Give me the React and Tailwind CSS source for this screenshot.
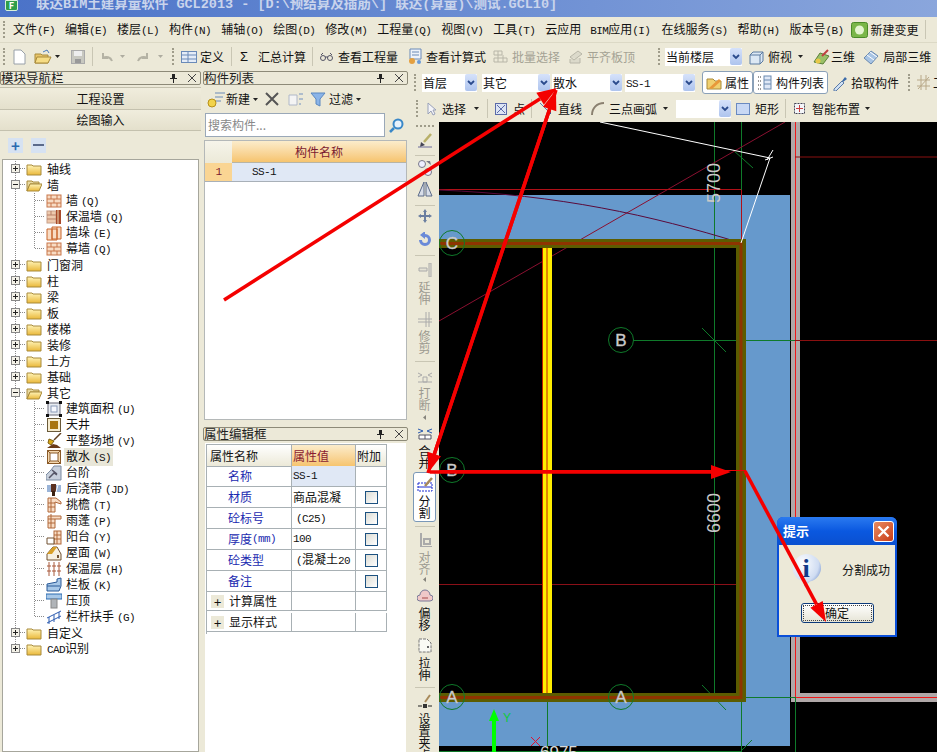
const CJK = "font-['Noto_Sans_CJK_SC','Liberation_Sans',sans-serif]";

// half width latin, like the bitmap song font of the app
const K = ({ children }) => (
  <span className="font-['Liberation_Mono','Noto_Sans_CJK_SC',monospace] text-[11px] tracking-[-0.6px]">{children}</span>
);

const Grip = ({ className = "" }) => (
  <div className={`w-[3px] h-[17px] shrink-0 border-l-2 border-dotted border-[#9f9c8a] ${className}`} />
);
const Sep = ({ className = "" }) => <div className={`w-px h-[19px] shrink-0 bg-[#c9c6b4] ${className}`} />;
const Caret = ({ className = "" }) => (
  <svg width="5" height="3" viewBox="0 0 5 3" className={`shrink-0 ${className}`}>
    <path d="M0 0h5L2.5 3z" fill="#222" />
  </svg>
);
const T = ({ children, className = "" }) => (
  <span className={`shrink-0 whitespace-nowrap leading-[16px] ${className}`}>{children}</span>
);
const Ic = ({ w = 16, h = 16, children, className = "" }) => (
  <svg width={w} height={h} viewBox={`0 0 ${w} ${h}`} className={`shrink-0 ${className}`}>{children}</svg>
);

const Combo = ({ w, label, className = "" }) => (
  <div className={`flex items-center justify-between h-[18px] bg-white shrink-0 pl-[1px] ${w} ${className}`}>
    <span className="leading-[16px] whitespace-nowrap">{label}</span>
    <div className="w-[12px] h-[17px] rounded-[2px] bg-gradient-to-b from-[#d6e2fa] to-[#aec4ee] flex items-center justify-center">
      <svg width="8" height="6" viewBox="0 0 8 6"><path d="M1 1l3 3 3-3" stroke="#2a4a8c" strokeWidth="1.8" fill="none" /></svg>
    </div>
  </div>
);

const PanelHead = ({ title }) => (
  <div className="flex items-center justify-between h-[14px] border border-[#8d8a78] rounded-[2px] bg-[#ece9d8] shrink-0">
    <span className="text-[12.5px] leading-[12px] whitespace-nowrap text-[#222]">{title}</span>
    <div className="flex items-center gap-[11px] pr-[4px]">
      <svg width="7" height="9" viewBox="0 0 7 9"><path d="M2 0h3v4h2v1H4v4H3V5H0V4h2z" fill="#222" /></svg>
      <svg width="8" height="8" viewBox="0 0 8 8"><path d="M0 0l8 8M8 0L0 8" stroke="#444" /></svg>
    </div>
  </div>
);

/* ---------- tree icons ---------- */
const Folder = () => (
  <Ic w={16} h={13}>
    <path d="M1 2h5l1 1h8v9H1z" fill="url(#folderFill)" stroke="#a88a3a" />
  </Ic>
);
const FolderOpen = () => (
  <Ic w={16} h={13}>
    <path d="M1 2h5l1 1h6v2H4L1 12z" fill="#e8d9a0" stroke="#a88a3a" />
    <path d="M4 5h12l-3 7H1z" fill="url(#folderFill)" stroke="#a88a3a" />
  </Ic>
);
const Brick = () => (
  <Ic>
    <rect x="1" y="2" width="14" height="12" fill="#f8dcc4" stroke="#c8764a" />
    <path d="M1 6h14M1 10h14M5 2v4M11 2v4M8 6v4M5 10v4M11 10v4" stroke="#c8764a" />
  </Ic>
);
const WarmWall = () => (
  <Ic>
    <rect x="1" y="2" width="9" height="12" fill="#eec9ac" stroke="#c8a08a" />
    <path d="M1 6h9M1 10h9M5 2v4" stroke="#b98068" />
    <rect x="10" y="1" width="5" height="14" fill="#a84a2a" />
    <path d="M12 1v14" stroke="#f0d8b0" />
  </Ic>
);
const Pier = () => (
  <Ic>
    <path d="M1 4h10v11H1zM6 2h9v12H6z" fill="#f8dcc4" stroke="#c8642a" />
    <path d="M6 4v11M11 2v12" stroke="#c8642a" />
  </Ic>
);
const Area = () => (
  <Ic>
    <rect x="2" y="2" width="12" height="12" fill="#e8ecf2" stroke="#667" />
    <rect x="5" y="5" width="6" height="6" fill="#f6f8ff" stroke="#8a9ab8" />
    <path d="M0 0h3v3H0zM13 0h3v3h-3zM0 13h3v3H0zM13 13h3v3h-3z" fill="#111" />
  </Ic>
);
const Well = () => (
  <Ic>
    <rect x="1.5" y="1.5" width="13" height="13" fill="#f6ecd0" stroke="#6a5a3a" />
    <rect x="4" y="4" width="8" height="8" fill="#a87410" />
  </Ic>
);
const Shovel = () => (
  <Ic>
    <path d="M15 0L8 7" stroke="#604020" strokeWidth="1.5" />
    <path d="M3 6l5 2-3 4-3-2z" fill="#d8a818" stroke="#806010" />
    <path d="M1 15l6-4 4 1 4 3z" fill="#6a3a18" />
  </Ic>
);
const Apron = () => (
  <Ic>
    <rect x="1.5" y="1.5" width="13" height="13" fill="#f4d8b0" stroke="#8a5a28" />
    <rect x="4" y="4" width="8" height="8" fill="#fff" stroke="#8a5a28" />
    <path d="M1 1l3 3M15 1l-3 3M1 15l3-3M15 15l-3-3" stroke="#8a5a28" />
  </Ic>
);
const Steps = () => (
  <Ic>
    <path d="M0 15V10l5-5 3-4 7 0v14z" fill="#c8d0dc" stroke="#7a8aa0" />
    <path d="M3 13l5-5 3 2M6 5l5 4" stroke="#556" strokeWidth="1.5" fill="none" />
  </Ic>
);
const Band = () => (
  <Ic>
    <rect x="1" y="4" width="14" height="7" fill="#9ab4d8" />
    <rect x="5" y="3" width="5" height="8" fill="#5a3020" />
    <rect x="6" y="10" width="3" height="5" fill="#3a2010" />
    <path d="M12 4l-2 7" stroke="#fff" />
  </Ic>
);
const Eave = ({ low }) => (
  <Ic>
    <path d={low ? "M2 3h13v3H9v9H2z" : "M2 1h8l5 4v2l-6-2v10H2z"} fill="#f8dcc4" stroke="#b0683a" />
    <path d="M2 6h7M2 10h7M5 1v14" stroke="#b0683a" />
  </Ic>
);
const Balcony = () => (
  <Ic>
    <rect x="8" y="2" width="7" height="13" fill="#f8dcc4" stroke="#b0683a" />
    <path d="M8 6h7M8 10h7M11 2v13" stroke="#b0683a" />
    <path d="M1 9h7v6H1z" fill="#fff" stroke="#705030" />
  </Ic>
);
const Roof = () => (
  <Ic>
    <path d="M1 9l6-7h4l4 7v6H1z" fill="#f6f0e0" stroke="#705030" />
    <path d="M1 9l6-7h4l-5 7z" fill="#d8a028" />
    <rect x="11" y="10" width="2" height="3" fill="#705030" />
  </Ic>
);
const Insul = () => (
  <Ic>
    <path d="M3 1v14M8 1v14M13 1v14M1 5h4M6 5h4M11 5h4M1 10h4M6 10h4M11 10h4" stroke="#a8583a" />
  </Ic>
);
const Parapet = () => (
  <Ic>
    <path d="M1 7l10-2 0-3 4-1v8l-2 5H1z" fill="#a8c8e8" stroke="#2a5a98" />
    <path d="M1 9h13" stroke="#2a5a98" />
  </Ic>
);
const Coping = () => (
  <Ic>
    <rect x="0" y="1" width="16" height="5" fill="#a8c8e8" stroke="#2a6ab0" />
    <rect x="5" y="6" width="6" height="9" fill="#b0b4b8" stroke="#888" />
  </Ic>
);
const Rail = () => (
  <Ic>
    <path d="M1 14l14-7M1 9l14-7M3 8v7M8 6v7M13 3v7" stroke="#2a5ab0" fill="none" />
  </Ic>
);

const tree = [
  { label: "轴线" },
  {
    label: "墙",
    open: true,
    kids: [
      [<Brick />, "墙", "(Q)"],
      [<WarmWall />, "保温墙", "(Q)"],
      [<Pier />, "墙垛", "(E)"],
      [<Brick />, "幕墙", "(Q)"],
    ],
  },
  { label: "门窗洞" },
  { label: "柱" },
  { label: "梁" },
  { label: "板" },
  { label: "楼梯" },
  { label: "装修" },
  { label: "土方" },
  { label: "基础" },
  {
    label: "其它",
    open: true,
    kids: [
      [<Area />, "建筑面积", "(U)"],
      [<Well />, "天井", ""],
      [<Shovel />, "平整场地", "(V)"],
      [<Apron />, "散水", "(S)", true],
      [<Steps />, "台阶", ""],
      [<Band />, "后浇带", "(JD)"],
      [<Eave />, "挑檐", "(T)"],
      [<Eave low />, "雨蓬", "(P)"],
      [<Balcony />, "阳台", "(Y)"],
      [<Roof />, "屋面", "(W)"],
      [<Insul />, "保温层", "(H)"],
      [<Parapet />, "栏板", "(K)"],
      [<Coping />, "压顶", ""],
      [<Rail />, "栏杆扶手", "(G)"],
    ],
  },
  { label: "自定义" },
  { label: "CAD识别", last: true },
];

const dots = { stroke: "#8a8a8a", strokeDasharray: "1 1" };

const RootRow = ({ item }) => (
  <div className="flex items-center h-4">
    <svg width="26" height="16" viewBox="0 0 26 16" className="shrink-0">
      <path d={item.last ? "M15.5 0v8" : "M15.5 0v16"} {...dots} />
      <path d="M16 7.5h10" {...dots} />
      <rect x="11.5" y="3.5" width="8" height="8" fill="#f4f2e8" stroke="#888" />
      <path d="M13 7.5h5" stroke="#222" />
      {!item.open && <path d="M15.5 5v5" stroke="#222" />}
    </svg>
    {item.open ? <FolderOpen /> : <Folder />}
    <T className="ml-[5px]">
      {item.label === "CAD识别" ? <><K>CAD</K>识别</> : item.label}
    </T>
  </div>
);

const KidRow = ({ kid, end }) => (
  <div className="flex items-center h-4">
    <svg width="46" height="16" viewBox="0 0 46 16" className="shrink-0">
      <path d="M15.5 0v16" {...dots} />
      <path d={end ? "M34.5 0v8" : "M34.5 0v16"} {...dots} />
      <path d="M35 7.5h10" {...dots} />
    </svg>
    {kid[0]}
    <T className={`ml-[2px] px-[2px] ${kid[3] ? "bg-[#e8e6d8]" : ""}`}>
      {kid[1]}<span className="pl-[3px]"><K>{kid[2]}</K></span>
    </T>
  </div>
);

const NavPanel = () => (
  <div className="w-[201px] shrink-0 flex flex-col pt-px h-full">
    <PanelHead title="模块导航栏" />
    <div className="h-[23px] mt-[2px] flex items-center justify-center border-y border-[#c4c1ae] bg-gradient-to-b from-[#f0eddd] to-[#e4e0cc] shrink-0">工程设置</div>
    <div className="h-[21px] flex items-center justify-center border-b border-[#c4c1ae] bg-gradient-to-b from-[#f0eddd] to-[#e4e0cc] shrink-0">绘图输入</div>
    <div className="h-[28px] flex items-center gap-2 pl-[8px] bg-[#ece9d8] shrink-0">
      <div className="w-[15px] h-[15px] bg-[#d6e2f2] flex items-center justify-center text-[#2a6ab0] font-bold text-[15px] leading-none">+</div>
      <div className="w-[15px] h-[15px] bg-[#d6e2f2] flex items-center justify-center">
        <div className="w-[11px] h-[2px] bg-[#5a6a8a]" />
      </div>
    </div>
    <div className="flex-1 ml-[2px] mr-[2px] bg-white border border-[#a6a69c] pt-px overflow-hidden">
      <div className="-ml-[3px]">
        {tree.map((item) => (
          <div key={item.label}>
            <RootRow item={item} />
            {item.kids?.map((kid, i) => (
              <KidRow key={kid[1]} kid={kid} end={i === item.kids.length - 1} />
            ))}
          </div>
        ))}
      </div>
    </div>
  </div>
);

const ListPanel = () => (
  <div className="h-[352px] flex flex-col pt-px shrink-0">
    <PanelHead title="构件列表" />
    <div className="h-[28px] flex items-center shrink-0 pl-[4px]">
      <Ic w={18} h={18}>
        <path d="M8 3h10M8 7h8M8 11h6" stroke="#6a8ab8" />
        <circle cx="5" cy="13" r="4" fill="#f2d34a" stroke="#b89018" />
      </Ic>
      <T className="ml-[1px]">新建</T>
      <Caret className="ml-[3px]" />
      <Ic w={14} h={14} className="ml-[7px]"><path d="M1 1l12 12M13 1L1 13" stroke="#555" strokeWidth="2" /></Ic>
      <Ic w={16} h={14} className="ml-[9px]">
        <path d="M1 3h8v10H1z" fill="#f4f4f4" stroke="#b0b8c8" />
        <path d="M11 2h4M11 7h4M11 12h2" stroke="#7090c0" />
      </Ic>
      <Ic w={16} h={16} className="ml-[6px]"><path d="M1 2h14l-5 6v7l-4-2V8z" fill="#8ab4e8" stroke="#5a88c0" /></Ic>
      <T className="ml-[3px]">过滤</T>
      <Caret className="ml-[3px]" />
    </div>
    <div className="flex items-center shrink-0 h-[24px]">
      <div className="w-[180px] h-[24px] ml-[2px] bg-white border border-[#9aa8b8] pl-[2px] flex items-center text-[#888]">
        <T>搜索构件...</T>
      </div>
      <Ic w={15} h={15} className="ml-[4px]">
        <circle cx="9" cy="6" r="4.5" fill="#e8f2fc" stroke="#3a88c8" strokeWidth="2" />
        <path d="M5 10l-4 4" stroke="#3a88c8" strokeWidth="2.5" />
      </Ic>
    </div>
    <div className="flex-1 mt-[3px] mx-[1px] mb-[2px] bg-white border border-[#b4b8b8] overflow-hidden">
      <div className="grid grid-cols-[27px_1fr] grid-rows-[22px_19px]">
        <div className="bg-gradient-to-b from-[#f6f4ea] to-[#ece9d8]" />
        <div className="bg-gradient-to-b from-[#fbeccb] to-[#f6c46e] flex items-center justify-center text-[#7a1a30] border-b border-[#b8b4a4]">构件名称</div>
        <div className="bg-[#fad593] flex items-center justify-center border-b border-[#a8b0b8] text-[#7a1a30]"><K>1</K></div>
        <div className="bg-[#e0e8f5] flex items-center pl-[20px] border-b border-[#a8b0b8]"><K>SS-1</K></div>
      </div>
    </div>
  </div>
);

const propRows = [
  ["名称", <K>SS-1</K>, false, true],
  ["材质", "商品混凝", true],
  ["砼标号", <span className="pl-[3px]"><K>(C25)</K></span>, true],
  [<>厚度<K>(mm)</K></>, <K>100</K>, true],
  ["砼类型", <span className="pl-[3px]"><K>(</K>混凝土<K>20</K></span>, true],
  ["备注", "", true],
];

const PropPanel = () => (
  <div className="flex-1 flex flex-col pt-[5px] min-h-0">
    <PanelHead title="属性编辑框" />
    <div className="flex-1 mt-[2px] ml-[2px] mr-[2px] bg-white pl-px pt-px overflow-hidden">
      <div className="grid grid-cols-[85px_64px_31px] auto-rows-[21px] w-[181px] border-l border-t border-[#a8b0b4]">
        <div className="h-[22px] flex items-center pl-[3px] bg-gradient-to-b from-white to-[#ece9d8] border-r border-b border-[#a8b0b4]">属性名称</div>
        <div className="h-[22px] flex items-center pl-px text-[#8a1a30] bg-gradient-to-b from-[#fbeccb] to-[#f6c46e] border-r border-b border-[#a8b0b4]">属性值</div>
        <div className="h-[22px] flex items-center pl-px bg-gradient-to-b from-white to-[#ece9d8] border-r border-b border-[#a8b0b4]">附加</div>
        {propRows.map(([name, value, check, active], i) => (
          <div key={i} className="contents">
            <div className="flex items-center pl-[21px] text-[#1a2ab0] border-r border-b border-[#a8b0b4] whitespace-nowrap">{name}</div>
            <div className={`flex items-center pl-px border-r border-b border-[#a8b0b4] whitespace-nowrap overflow-hidden ${active ? "bg-[#e0e8f5]" : ""}`}>{value}</div>
            <div className="flex items-center justify-center border-r border-b border-[#a8b0b4]">
              {check && <div className="w-[13px] h-[13px] border border-[#1c5180] bg-gradient-to-br from-[#dcdcd4] to-white" />}
            </div>
          </div>
        ))}
        {["计算属性", "显示样式"].map((name) => (
          <div key={name} className="contents">
            <div className="h-[19px] flex items-center pl-[4px] gap-[5px] border-r border-b border-[#a8b0b4]">
              <div className="w-[13px] h-[13px] bg-[#ece9d8] flex items-center justify-center text-[13px] leading-none">+</div>
              {name}
            </div>
            <div className="h-[19px] border-r border-b border-[#a8b0b4]" />
            <div className="h-[19px] border-r border-b border-[#a8b0b4]" />
          </div>
        ))}
      </div>
    </div>
  </div>
);

const VText = ({ text, className = "" }) => (
  <div className={`flex flex-col items-center shrink-0 ${className}`}>
    {text.split("").map((c, i) => <div key={i} className="h-[12px] leading-[12px]">{c}</div>)}
  </div>
);
const VSep = ({ className = "" }) => <div className={`w-[20px] h-px bg-[#c9c6b4] shrink-0 ${className}`} />;

const SideTools = () => (
  <div className="w-[29px] shrink-0 h-full flex flex-col items-center pt-[3px] overflow-hidden text-[#111] bg-[#ece9d8]">
    <div className="w-[18px] h-[2px] border-t-2 border-dotted border-[#9f9c8a] shrink-0" />
    <Ic className="mt-[6px]">
      <path d="M14 1L7 9" stroke="#b8b068" strokeWidth="2.5" />
      <path d="M4 9l4 3-5 2z" fill="#445" />
      <path d="M1 14h14" stroke="#6a6a9a" />
    </Ic>
    <VSep className="mt-[6px]" />
    <Ic className="mt-[4px]">
      <circle cx="5" cy="4" r="3.5" fill="#eef" stroke="#778" />
      <circle cx="11" cy="12" r="3.5" fill="#eef" stroke="#778" />
      <path d="M9 1l5 4-1-4z" fill="#778" />
    </Ic>
    <Ic w={16} h={18} className="mt-[4px]">
      <path d="M7 2L1 16h6zM9 2l6 14H9z" fill="#d8dee8" stroke="#5a6a88" />
    </Ic>
    <VSep className="mt-[7px]" />
    <Ic className="mt-[2px]">
      <path d="M8 1l2 3H9v3h3V6l3 2-3 2V9H9v3h1l-2 3-2-3h1V9H4v1L1 8l3-2v1h3V4H6z" fill="#6a7ea0" />
    </Ic>
    <Ic className="mt-[8px]">
      <path d="M8 2a6 6 0 1 1-6 6h3a3 3 0 1 0 3-3v2L3 3l5-4z" fill="#6a8ad8" />
    </Ic>
    <VSep className="mt-[7px]" />
    <Ic h={14} className="mt-[7px]">
      <path d="M2 5h8v3H2zM12 0h2v14h-2z" fill="#e4e2d4" stroke="#aaa" />
    </Ic>
    <VText text="延伸" className="mt-[4px] text-[#9c9a90]" />
    <Ic h={15} className="mt-[7px]"><path d="M1 7h14M1 10h14M9 0v15M12 0v15" stroke="#aaa" /></Ic>
    <VText text="修剪" className="mt-[3px] text-[#9c9a90]" />
    <VSep className="mt-[7px]" />
    <Ic h={12} className="mt-[9px]"><path d="M1 2l4 2-4 2M15 2l-4 2 4 2M6 6h4v5H6zM1 11h14" stroke="#aaa" fill="none" /></Ic>
    <VText text="打断" className="mt-[4px] text-[#9c9a90]" />
    <Caret className="mt-[5px] rotate-90 opacity-50" />
    <Ic h={12} className="mt-[9px]"><path d="M1 1l5 2-5 2M15 1l-5 2 5 2" stroke="#2a5ab0" fill="none" /><path d="M2 7h12v4H2zM8 7v4" stroke="#556" fill="#fff" /></Ic>
    <VText text="合并" className="mt-[5px]" />
    <div className="mt-[3px] w-[23px] h-[50px] shrink-0 bg-white border border-[#7a98b8] rounded-[3px] flex flex-col items-center pt-[4px]">
      <Ic h={15}>
        <rect x="1" y="6" width="14" height="8" fill="none" stroke="#1a2ad0" strokeDasharray="2 1" />
        <path d="M1 10h14" stroke="#1a2ad0" />
        <path d="M15 1l-7 8" stroke="#a88a5a" strokeWidth="2.5" />
      </Ic>
      <VText text="分割" className="mt-[3px]" />
    </div>
    <VSep className="mt-[4px]" />
    <Ic h={14} className="mt-[6px]"><path d="M4 0v14h11M7 6h6v5H7z" stroke="#aaa" fill="none" strokeWidth="2" /></Ic>
    <VText text="对齐" className="mt-[4px] text-[#9c9a90]" />
    <Caret className="mt-[3px] rotate-90 opacity-50" />
    <Ic h={14} className="mt-[8px]">
      <path d="M3 12a3 3 0 0 1 0-6 5 5 0 0 1 10 0 3 3 0 0 1 0 6z" fill="#f0c8c8" stroke="#7a7a98" />
      <path d="M5 9h6" stroke="#c88" strokeWidth="2" />
    </Ic>
    <VText text="偏移" className="mt-[4px]" />
    <Ic h={15} className="mt-[7px]">
      <path d="M2 1h8l4 4v9H2z" fill="#fafaf4" stroke="#777" strokeDasharray="3 1" />
      <path d="M10 8h2v2h-2z" fill="#666" />
    </Ic>
    <VText text="拉伸" className="mt-[4px]" />
    <VSep className="mt-[6px]" />
    <Ic className="mt-[6px]">
      <path d="M13 1L8 8" stroke="#a88a5a" strokeWidth="2" />
      <path d="M1 12h4M11 12h4" stroke="#222" />
      <rect x="6" y="10" width="4" height="4" fill="#333" />
    </Ic>
    <VText text="设置夹点" className="mt-[3px]" />
  </div>
);

const Hex = ({ cx, cy, label }) => (
  <g>
    <circle cx={cx} cy={cy} r="12.5" fill="none" stroke="#0f7a2a" />
    <text x={cx} y={cy + 6} textAnchor="middle" fontSize="17" fontFamily="Liberation Sans" stroke="#bdbdbd" strokeWidth="0.4" fill="#d0d0d0">{label}</text>
  </g>
);

const Cad = () => (
  <svg width="498" height="630" viewBox="439 122 498 630" className="shrink-0 block">
    <rect x="439" y="122" width="498" height="630" fill="#000" />
    {/* slab */}
    <rect x="439" y="195" width="351" height="551" fill="#6699cc" />
    <rect x="439" y="248" width="297" height="445" fill="#000" />
    {/* grey beam on the right */}
    <rect x="791" y="122" width="9" height="580" fill="#b0a8a8" />
    <rect x="795" y="693" width="142" height="9" fill="#b0a8a8" />
    <rect x="800" y="122" width="137" height="571" fill="#000" />
    <path d="M795.5 122v575.5H937" stroke="#f01818" fill="none" />
    <path d="M795 157h142M795 340.5h142" stroke="#8a1010" />
    {/* thin construction lines */}
    <path d="M714.5 122V700M741.5 122V240" stroke="#0f7a2a" />
    <path d="M633 340.5h162M547.5 693V752M741.5 697V752M795.5 697V752M741 697.5h54M439 751.5h302" stroke="#0f7a2a" />
    <path d="M702 328l24 24M733 150l20 18M702 685l24 25M741 751l11-11" stroke="#0f7a2a" />
    <path d="M439 321L785 122" stroke="#8a1030" />
    <path d="M439 189.5h302M741.5 190v50" stroke="#b01018" />
    <path d="M439 190C560 195 650 215 741 243" stroke="#5a0a3a" fill="none" />
    <path d="M439 584.5h302" stroke="#8a1018" />
    {/* wall */}
    <rect x="439" y="239" width="307" height="9" fill="#5c5c00" />
    <rect x="736" y="239" width="10" height="463" fill="#5c5c00" />
    <rect x="439" y="693" width="307" height="9" fill="#5c5c00" />
    <path d="M439 243.5h302v454H439" stroke="#8e3400" strokeWidth="3" fill="none" />
    <rect x="542" y="248" width="10" height="445" fill="#ffee00" />
    <path d="M542.5 248v445M547 248v445" stroke="#c02000" />
    {/* white bits */}
    <path d="M600 122l170 36-29 85M773 150l-6 10M765 160l8-3" stroke="#fff" fill="none" />
    <Hex cx={452} cy={243} label="C" />
    <Hex cx={621} cy={340} label="B" />
    <Hex cx={452} cy={470} label="B" />
    <Hex cx={452} cy={697} label="A" />
    <Hex cx={621} cy={697} label="A" />
    <text transform="translate(720 203) rotate(-90)" fontSize="18" fontFamily="Liberation Sans" fill="#c8c8c8">5700</text>
    <text transform="translate(720 533) rotate(-90)" fontSize="18" fontFamily="Liberation Sans" fill="#c8c8c8">6600</text>
    <text x="540" y="758" fontSize="17" fontFamily="Liberation Sans" fill="#d8d8d8">6975</text>
    {/* axis */}
    <path d="M494 709l5 12h-3v31h-4v-31h-3z" fill="#00ff00" />
    <text x="503" y="722" fontSize="12" fontFamily="Liberation Sans" fill="#0fc83a">Y</text>
    <path d="M531 737l9 9M540 737l-9 9" stroke="#e01030" />
  </svg>
);

const Arrow = ({ x1, y1, x2, y2 }) => {
  const a = Math.atan2(y2 - y1, x2 - x1);
  const bx = x2 - 20 * Math.cos(a);
  const by = y2 - 20 * Math.sin(a);
  const nx = 7 * Math.sin(a);
  const ny = 7 * Math.cos(a);
  return (
    <g>
      <line x1={x1} y1={y1} x2={bx} y2={by} stroke="#f40000" strokeWidth="3.5" />
      <polygon points={`${x2},${y2} ${bx + nx},${by - ny} ${bx - nx},${by + ny}`} fill="#f40000" />
    </g>
  );
};

const Dialog = () => (
  <div className="absolute left-[777px] top-[517px] w-[120px] h-[120px] rounded-t-[6px] bg-[#0a4fd8] p-[2px] pt-0 flex flex-col">
    <div className="h-[28px] -mx-[2px] rounded-t-[6px] bg-gradient-to-b from-[#2a7af0] via-[#0a58e0] to-[#0a50d0] flex items-center justify-between pl-[6px] pr-[3px] shrink-0">
      <span className="text-white font-bold text-[13px]">提示</span>
      <div className="w-[21px] h-[21px] rounded-[3px] border border-white bg-gradient-to-br from-[#e88a60] to-[#c83a14] flex items-center justify-center">
        <svg width="13" height="13" viewBox="0 0 13 13"><path d="M1.5 1.5l10 10M11.5 1.5l-10 10" stroke="#fff" strokeWidth="2.4" /></svg>
      </div>
    </div>
    <div className="flex-1 bg-[#ece9d8] flex flex-col items-center">
      <div className="flex items-center w-full pl-[11px] pt-[8px]">
        <svg width="33" height="34" viewBox="0 0 33 34" className="shrink-0">
          <defs>
            <radialGradient id="infoBall" cx="0.35" cy="0.3" r="0.8">
              <stop offset="0" stopColor="#ffffff" />
              <stop offset="0.7" stopColor="#cfdcf2" />
              <stop offset="1" stopColor="#6a8ac8" />
            </radialGradient>
          </defs>
          <path d="M16 1a15 14 0 0 1 4 27.5l-6 5 0-5A15 14 0 0 1 16 1z" fill="url(#infoBall)" />
          <text x="16" y="24" textAnchor="middle" fontSize="26" fontWeight="700" fontFamily="Liberation Serif" fill="#123a88">i</text>
        </svg>
        <span className="ml-[19px] text-[#111] whitespace-nowrap">分割成功</span>
      </div>
      <div className="mt-[16px] w-[73px] h-[20px] rounded-[3px] border border-[#0c3a7a] bg-gradient-to-b from-white to-[#e6e4d6] flex items-center justify-center shrink-0 outline-1 -outline-offset-3 outline-dotted outline-[#444]">
        确定
      </div>
    </div>
  </div>
);

const menu = [
  ["文件", "(F)"], ["编辑", "(E)"], ["楼层", "(L)"], ["构件", "(N)"], ["辅轴", "(O)"], ["绘图", "(D)"], ["修改", "(M)"],
  ["工程量", "(Q)"], ["视图", "(V)"], ["工具", "(T)"], ["云应用", ""],
];
const menu2 = [["在线服务", "(S)"], ["帮助", "(H)"], ["版本号", "(B)"]];

export default function App() {
  return (
    <div className={`relative w-[937px] h-[752px] overflow-hidden bg-[#ece9d8] text-[12px] text-[#111] ${CJK}`}>
      <svg className="absolute w-0 h-0">
        <defs>
          <linearGradient id="folderFill" x1="0" y1="0" x2="0" y2="1">
            <stop offset="0" stopColor="#fff4b8" />
            <stop offset="1" stopColor="#eab83a" />
          </linearGradient>
        </defs>
      </svg>

      {/* title bar */}
      <div className="h-[17px] flex items-start overflow-hidden bg-gradient-to-r from-[#4a72c8] to-[#8aa6dc]">
        <div className="ml-[5px] w-[13px] h-[11px] bg-[#2f9e4a] rounded-b-[2px] border border-[#d8f0d8] flex items-end justify-center text-[9px] leading-[9px] text-white font-bold">F</div>
        <span className="ml-[18px] -mt-[5px] whitespace-nowrap font-['Liberation_Mono','Noto_Sans_CJK_SC',monospace] font-bold text-[13.5px] text-[#c9d4ec]">
          联达BIM土建算量软件 GCL2013 - [D:\预结算及插筋\] 联达(算量)\测试.GCL10]
        </span>
      </div>

      {/* menu */}
      <div className="h-[26px] flex items-center pl-[3px] border-b border-[#dcd9c6]">
        <Grip />
        <div className="flex items-center gap-[10px] ml-[7px]">
          {menu.map(([a, b]) => <T key={a}>{a}<K>{b}</K></T>)}
          <T className="-ml-px"><K>BIM</K>应用<K>(I)</K></T>
          {menu2.map(([a, b], i) => <T key={a} className={i === 0 ? "ml-px" : ""}>{a}<K>{b}</K></T>)}
        </div>
        <Ic w={17} h={16} className="ml-[8px]">
          <rect x="0.5" y="0.5" width="16" height="15" rx="2" fill="#7ab648" stroke="#4a8a28" />
          <circle cx="8.5" cy="8" r="4.5" fill="#e4f4d0" />
        </Ic>
        <T className="ml-[2px]">新建变更</T>
        <Sep className="ml-[7px]" />
      </div>

      {/* standard toolbar */}
      <div className="h-[27px] flex items-center pl-[3px]">
        <Grip />
        <Ic w={13} h={16} className="ml-[7px]"><path d="M1 1h7l4 4v10H1z" fill="#fff" stroke="#98a0a8" /></Ic>
        <Ic w={18} h={16} className="ml-[8px]">
          <path d="M1 5h6l1 1h6v8H1z" fill="#e8c468" stroke="#a88a3a" />
          <path d="M3 8h14l-3 6H1z" fill="#f6dc84" stroke="#a88a3a" />
          <path d="M9 3l4-2 2 3" stroke="#4a7ab8" fill="none" />
        </Ic>
        <Caret className="ml-[3px]" />
        <Ic w={14} h={14} className="ml-[11px]">
          <rect x="0.5" y="0.5" width="13" height="13" fill="#c8c8c0" stroke="#aaa" />
          <rect x="3" y="1" width="8" height="5" fill="#eee" />
          <rect x="4" y="9" width="6" height="4" fill="#999" />
        </Ic>
        <Sep className="ml-[7px]" />
        <Ic w={13} h={13} className="ml-[7px]"><path d="M3 3v5h5M3 8a6 6 0 0 1 9 3" stroke="#b4b2a4" strokeWidth="2" fill="none" /></Ic>
        <Caret className="ml-[7px] opacity-30" />
        <Ic w={12} h={13} className="ml-[12px]"><path d="M10 3v5H5M10 8a6 6 0 0 0-9 3" stroke="#b4b2a4" strokeWidth="2" fill="none" /></Ic>
        <Caret className="ml-[9px] opacity-30" />
        <Grip className="ml-[9px]" />
        <Ic w={16} h={14} className="ml-[6px]">
          <rect x="0.5" y="1.5" width="15" height="11" fill="#e4ecf8" stroke="#6a8ab8" />
          <path d="M1 5h14M1 9h14M7 2v10" stroke="#6a8ab8" />
        </Ic>
        <T className="ml-[3px]">定义</T>
        <Sep className="ml-[7px]" />
        <T className="ml-[8px] w-[10px] font-['Liberation_Sans',sans-serif] text-[13px]">Σ</T>
        <T className="ml-[8px]">汇总计算</T>
        <Sep className="ml-[6px]" />
        <Ic w={13} h={10} className="ml-[7px]">
          <circle cx="3" cy="6" r="2.5" fill="none" stroke="#556" />
          <circle cx="10" cy="6" r="2.5" fill="none" stroke="#556" />
          <path d="M5 5h3M1 3l2-2M12 3l-2-2" stroke="#556" />
        </Ic>
        <T className="ml-[5px]">查看工程量</T>
        <Ic w={17} h={17} className="ml-[9px]">
          <path d="M3 1h11v10H3z" fill="#eef2fa" stroke="#6a8ab8" />
          <path d="M5 4h7M5 7h7" stroke="#6a8ab8" />
          <circle cx="5" cy="13" r="3" fill="#e4a040" />
          <circle cx="12" cy="14" r="2" fill="#6a9ad8" />
        </Ic>
        <T className="ml-[2px]">查看计算式</T>
        <Ic w={15} h={15} className="ml-[7px]"><path d="M1 2h8v4H1zM1 9h13v4H1zM5 2v11M10 6v7" stroke="#b8b6a8" fill="none" /></Ic>
        <T className="ml-[4px] text-[#a4a294]">批量选择</T>
        <Ic w={14} h={15} className="ml-[9px]"><path d="M1 8l8-6 4 3-8 6zM1 10v4h10V9" stroke="#b8b6a8" fill="#dcdacb" /></Ic>
        <T className="ml-[4px] text-[#a4a294]">平齐板顶</T>
        <Grip className="ml-[23px]" />
        <Combo w="w-[77px]" label="当前楼层" className="ml-[4px]" />
        <Ic className="ml-[6px]">
          <path d="M5 3h10v9l-3 3H2V6z" fill="#dce8f4" stroke="#5a7aa0" />
          <path d="M2 6h10v9M12 6l3-3" stroke="#5a7aa0" fill="none" />
        </Ic>
        <T className="ml-[4px]">俯视</T>
        <Caret className="ml-[6px]" />
        <Ic w={17} h={17} className="ml-[10px]">
          <path d="M1 14l6-9 9 3-6 8z" fill="#9ac068" stroke="#5a8038" />
          <path d="M9 8l6-6" stroke="#c04040" strokeWidth="2" />
          <circle cx="5" cy="13" r="2.5" fill="#e8c848" />
        </Ic>
        <T className="ml-px">三维</T>
        <Ic className="ml-[8px]">
          <path d="M1 9l7-7 7 5-7 8z" fill="#a8c4e4" stroke="#6a8ab0" />
          <path d="M4 6l7 5M7 3l7 5" stroke="#fff" />
        </Ic>
        <T className="ml-[4px]">局部三维</T>
      </div>

      <div className="h-[682px] flex">
        <NavPanel />
        <div className="w-[205px] shrink-0 ml-[2px] flex flex-col h-full">
          <ListPanel />
          <PropPanel />
        </div>
        <div className="w-[527px] shrink-0 ml-[2px] flex flex-col h-full">
          <div className="h-[25px] flex items-center shrink-0 overflow-hidden">
            <Grip className="ml-[4px]" />
            <Combo w="w-[55px]" label="首层" className="ml-[5px]" />
            <Combo w="w-[68px]" label="其它" className="ml-[5px]" />
            <Combo w="w-[70px]" label="散水" className="ml-[2px]" />
            <Combo w="w-[70px]" label={<K>SS-1</K>} className="ml-[3px]" />
            <div className="ml-[7px] w-[51px] h-[23px] bg-white border border-[#8aa0b8] rounded-[3px] flex items-center justify-between px-[3px] shrink-0">
              <Ic w={17} h={14}>
                <path d="M1 3h6l2 2h6v8H1z" fill="#f0d070" stroke="#a88a3a" />
                <path d="M3 12l10-9 2 2-9 8z" fill="#e8983a" />
              </Ic>
              <span>属性</span>
            </div>
            <div className="w-[75px] h-[23px] bg-white border border-[#8aa0b8] rounded-[3px] flex items-center justify-between px-[3px] shrink-0">
              <Ic w={15} h={15}>
                <path d="M1 2h3M1 6h3M1 10h3M1 14h3" stroke="#333" strokeDasharray="1 1" />
                <rect x="7" y="1" width="7" height="13" fill="#dfe8f6" stroke="#6a8ab0" />
                <path d="M7 5h7M7 9h7" stroke="#6a8ab0" />
              </Ic>
              <span>构件列表</span>
            </div>
            <Ic className="ml-[4px]">
              <path d="M2 14l8-8 2 2-8 8H2z" fill="#cfe0f2" stroke="#5a7aa8" />
              <path d="M10 6l3-4 2 2-4 3z" fill="#3a6aa8" />
            </Ic>
            <T className="ml-[3px]">拾取构件</T>
            <Grip className="ml-[9px]" />
            <Ic w={13} h={15} className="ml-[6px]"><path d="M0 11h13M0 5h13M4 0v15M9 0v15M1 14L12 2" stroke="#b8a888" /></Ic>
            <T className="ml-[3px]">工</T>
          </div>
          <div className="h-[27px] flex items-center shrink-0">
            <Grip className="ml-[6px]" />
            <Ic w={9} h={14} className="ml-[8px]"><path d="M1 1v11l3-3 2 4 2-1-2-4h3z" fill="#f4f4f8" stroke="#98a0b8" /></Ic>
            <T className="ml-[6px]">选择</T>
            <Caret className="ml-[8px]" />
            <Sep className="ml-[8px]" />
            <Ic w={12} h={12} className="ml-[7px]">
              <rect x="0.5" y="0.5" width="11" height="11" fill="#dce4f4" stroke="#5a6aa8" />
              <path d="M2 2l8 8M10 2l-8 8" stroke="#5a6aa8" />
            </Ic>
            <T className="ml-[6px]">点</T>
            <Sep className="ml-[6px]" />
            <Ic w={13} h={13} className="ml-[7px]"><path d="M1 1l11 11" stroke="#5a7ab8" /><rect x="9" y="9" width="3" height="3" fill="#3a5a98" /></Ic>
            <T className="ml-[6px]">直线</T>
            <Ic w={13} h={13} className="ml-[9px]"><path d="M1 13C1 6 6 1 13 1" stroke="#8a8070" strokeWidth="2" fill="none" /></Ic>
            <T className="ml-[5px]">三点画弧</T>
            <Caret className="ml-[6px]" />
            <Combo w="w-[55px]" label="" className="ml-[8px]" />
            <Ic w={14} h={12} className="ml-[5px]"><rect x="0.5" y="0.5" width="13" height="11" fill="#c8d8f4" stroke="#6a8ac0" /></Ic>
            <T className="ml-[5px]">矩形</T>
            <Sep className="ml-[6px]" />
            <Ic w={13} h={13} className="ml-[7px]">
              <rect x="1.5" y="1.5" width="10" height="10" fill="#f4f6fa" stroke="#445" strokeDasharray="2 1" />
              <path d="M6.5 3v7M3 6.5h7" stroke="#c84040" />
            </Ic>
            <T className="ml-[6px]">智能布置</T>
            <Caret className="ml-[5px]" />
          </div>
          <div className="flex h-[630px] shrink-0">
            <SideTools />
            <Cad />
          </div>
        </div>
      </div>

      <Dialog />

      {/* hand drawn red annotation arrows */}
      <svg width="937" height="752" viewBox="0 0 937 752" className="absolute inset-0 pointer-events-none">
        <Arrow x1={224} y1={300} x2={557} y2={88} />
        <Arrow x1={428} y1={473} x2={556} y2={90} />
        <Arrow x1={556} y1={90} x2={428} y2={473} />
        <Arrow x1={430} y1={472} x2={731} y2={472} />
        <line x1={439} y1={470.5} x2={746} y2={470.5} stroke="#f40000" />
        <Arrow x1={745} y1={471} x2={826} y2={622} />
      </svg>
    </div>
  );
}
